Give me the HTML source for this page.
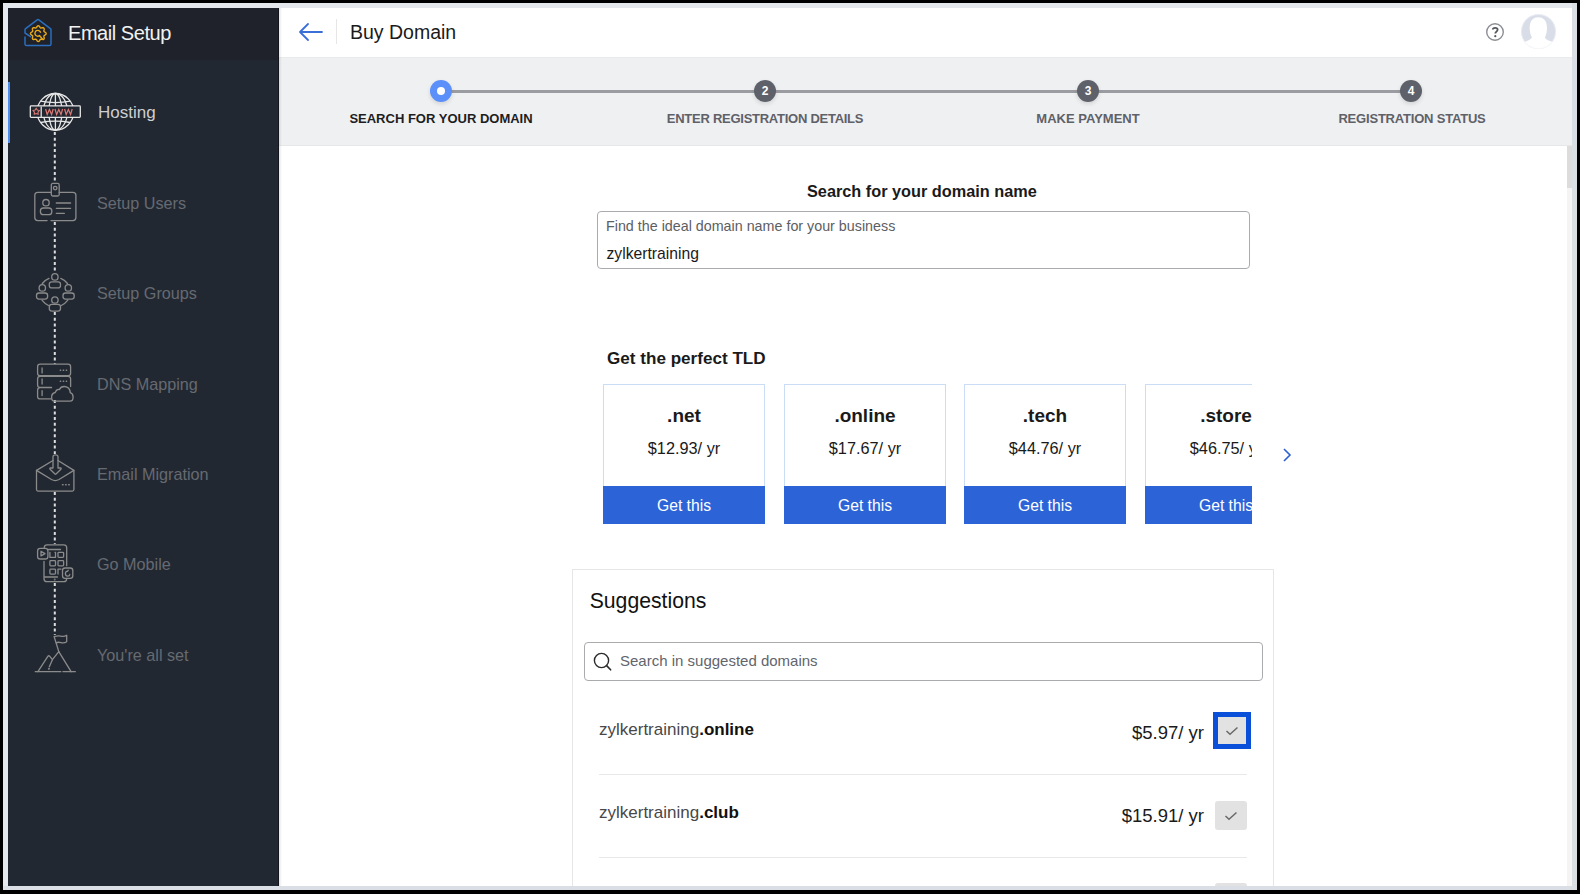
<!DOCTYPE html>
<html><head><meta charset="utf-8">
<style>
*{margin:0;padding:0;box-sizing:border-box}
html,body{width:1580px;height:894px;overflow:hidden;background:#000;font-family:"Liberation Sans",sans-serif}
.abs{position:absolute}
#frame{position:absolute;left:3px;top:3px;width:1574px;height:887px;background:#d9dfe5}
#frame2{position:absolute;left:3px;top:3px;width:5px;height:883px;background:#e4e7eb}
#frame3{position:absolute;left:3px;top:3px;width:1569px;height:5px;background:#e4e7eb}
#side{position:absolute;left:8px;top:8px;width:271px;height:878px;background:#222831;overflow:hidden}
#sidehead{position:absolute;left:0;top:0;width:271px;height:52px;background:#1f222a}
#sideedge{position:absolute;left:278px;top:8px;width:1px;height:878px;background:#14161b}
#shadow{position:absolute;left:279px;top:8px;width:3px;height:878px;background:linear-gradient(90deg,rgba(0,0,0,.10),rgba(0,0,0,0))}
#main{position:absolute;left:279px;top:8px;width:1293px;height:878px;background:#fff;overflow:hidden}
#hdr{position:absolute;left:0;top:0;width:1293px;height:50px;background:#fff;border-bottom:1px solid #e8eaec}
#stepper{position:absolute;left:0;top:50px;width:1293px;height:88px;background:#eff0f2;border-bottom:1px solid #e6e7e9}
.t{position:absolute;white-space:nowrap;line-height:1}
.navt{position:absolute;left:89px;font-size:16.2px;color:#666a71;white-space:nowrap;line-height:1}
.step{position:absolute;width:22px;height:22px;border-radius:50%;background:#5e6169;color:#fff;font-size:12px;font-weight:bold;text-align:center;line-height:22px;box-shadow:0 2px 4px rgba(0,0,0,.12)}
.slab{position:absolute;font-size:13px;font-weight:bold;color:#5f6168;white-space:nowrap;line-height:1;transform:translateX(-50%)}
.card{position:absolute;top:376px;width:162px;height:140px;border:1px solid #cadcf6;background:#fff}
.card .tld{position:absolute;left:0;width:160px;top:21px;text-align:center;font-size:19px;font-weight:bold;color:#1a1a1a;line-height:1}
.card .pr{position:absolute;left:0;width:160px;top:55px;text-align:center;font-size:16.3px;color:#1a1a1a;line-height:1}
.card .btn{position:absolute;left:-1px;bottom:-1px;width:162px;height:38px;background:#2c64d8;color:#fff;font-size:15.7px;text-align:center;line-height:40px}
.ic{fill:none;stroke:#8b8b8b;stroke-width:1.3;stroke-linecap:round;stroke-linejoin:round}
</style></head>
<body>
<div id="frame"></div><div id="frame2"></div><div id="frame3"></div>
<div id="side">
  <div id="sidehead">
    <svg class="abs" style="left:12px;top:8px" width="36" height="36" viewBox="0 0 36 36">
      <path d="M10.5 20.6 L5 17 V14 Q5 13.2 5.6 12.7 L17.2 3.9 Q18 3.3 18.8 3.9 L30.4 12.7 Q31 13.2 31 14 V28 Q31 29.6 29.4 29.6 H6.6 Q5 29.6 5 28 V21" fill="none" stroke="#2a6fc0" stroke-width="1.5" stroke-linejoin="round" stroke-linecap="round"/>
      <path d="M26.20 17.60 L26.06 18.11 L25.69 18.57 L25.17 18.97 L24.63 19.30 L24.19 19.60 L23.94 19.93 L23.88 20.35 L23.97 20.88 L24.12 21.49 L24.21 22.14 L24.15 22.73 L23.89 23.19 L23.43 23.45 L22.84 23.51 L22.19 23.42 L21.58 23.27 L21.05 23.18 L20.63 23.24 L20.30 23.49 L20.00 23.93 L19.67 24.47 L19.27 24.99 L18.81 25.36 L18.30 25.50 L17.79 25.36 L17.33 24.99 L16.93 24.47 L16.60 23.93 L16.30 23.49 L15.97 23.24 L15.55 23.18 L15.03 23.27 L14.41 23.42 L13.76 23.51 L13.17 23.45 L12.71 23.19 L12.45 22.73 L12.39 22.14 L12.48 21.49 L12.63 20.88 L12.72 20.35 L12.66 19.93 L12.41 19.60 L11.97 19.30 L11.43 18.97 L10.91 18.57 L10.54 18.11 L10.40 17.60 L10.54 17.09 L10.91 16.63 L11.43 16.23 L11.97 15.90 L12.41 15.60 L12.66 15.27 L12.72 14.85 L12.63 14.33 L12.48 13.71 L12.39 13.06 L12.45 12.47 L12.71 12.01 L13.17 11.75 L13.76 11.69 L14.41 11.78 L15.02 11.93 L15.55 12.02 L15.97 11.96 L16.30 11.71 L16.60 11.27 L16.93 10.73 L17.33 10.21 L17.79 9.84 L18.30 9.70 L18.81 9.84 L19.27 10.21 L19.67 10.73 L20.00 11.27 L20.30 11.71 L20.63 11.96 L21.05 12.02 L21.58 11.93 L22.19 11.78 L22.84 11.69 L23.43 11.75 L23.89 12.01 L24.15 12.47 L24.21 13.06 L24.12 13.71 L23.97 14.32 L23.88 14.85 L23.94 15.27 L24.19 15.60 L24.63 15.90 L25.17 16.23 L25.69 16.63 L26.06 17.09 L26.20 17.60Z" fill="none" stroke="#e8a91a" stroke-width="1.4" stroke-linejoin="round"/>
      <path d="M20.5 16.2 A2.9 2.9 0 1 0 19.6 19.6 L22.6 23.2" fill="none" stroke="#e8a91a" stroke-width="1.4" stroke-linecap="round" stroke-linejoin="round"/>
    </svg>
    <div class="t" style="left:60px;top:15.4px;font-size:20px;letter-spacing:-0.45px;color:#f2f2f2">Email Setup</div>
  </div>
  <div class="abs" style="left:0;top:74px;width:2px;height:61px;background:#4d8ff0"></div>
  <div class="navt" style="left:90px;top:96.3px;font-size:17px;color:#cdcfd3">Hosting</div>
  <div class="navt" style="top:187.2px">Setup Users</div>
  <div class="navt" style="top:277.1px">Setup Groups</div>
  <div class="navt" style="top:367.7px">DNS Mapping</div>
  <div class="navt" style="top:458.1px">Email Migration</div>
  <div class="navt" style="top:548.1px">Go Mobile</div>
  <div class="navt" style="top:638.5px">You're all set</div>
</div>
<div id="sideedge"></div>
<svg class="abs" style="left:0;top:0" width="279" height="894" viewBox="0 0 279 894">
  <g stroke="#dedede" stroke-width="2" stroke-dasharray="3 2.7">
    <path d="M54.8 132 V183"/><path d="M54.8 222 V273"/><path d="M54.8 312 V364"/>
    <path d="M54.8 400 V454"/><path d="M54.8 492 V544"/><path d="M54.8 583 V635"/>
  </g>
  <!-- globe -->
  <g transform="translate(25,88)" fill="none" stroke="#e6e6e6" stroke-width="1.3">
    <circle cx="30.4" cy="23.8" r="18.3"/>
    <ellipse cx="30.4" cy="23.8" rx="6.5" ry="18.3"/>
    <ellipse cx="30.4" cy="23.8" rx="12" ry="18.3"/>
    <path d="M30.4 5.5 V42.1"/>
    <path d="M15.5 13.1 Q30.4 16 45.3 13.1"/>
    <path d="M15.5 34.5 Q30.4 31.6 45.3 34.5"/>
    <rect x="5.3" y="17.9" width="50" height="11.5" rx="0.8" fill="#222831"/>
    <path d="M16.2 18.5 V29"/>
    <path d="M11.20 20.30 L12.32 22.06 L14.34 22.58 L13.01 24.19 L13.14 26.27 L11.20 25.50 L9.26 26.27 L9.39 24.19 L8.06 22.58 L10.08 22.06Z" stroke="#e07a74" stroke-width="1.1"/>
    <path d="M20.6 21 L22.2 26.6 L24.4 21.6 L26.6 26.6 L28.2 21 M30 21 L31.6 26.6 L33.8 21.6 L36 26.6 L37.6 21 M39.6 21 L41.2 26.6 L43.4 21.6 L45.6 26.6 L47.2 21" stroke="#e07a74" stroke-width="1.2"/>
  </g>
  <!-- setup users -->
  <g transform="translate(25,175)" class="ic">
    <path d="M22.1 45.6 H12.8 Q9.8 45.6 9.8 42.6 V20.3 Q9.8 17.3 12.8 17.3 H26.3 M34.2 17.3 H47.9 Q50.9 17.3 50.9 20.3 V42.6 Q50.9 45.6 47.9 45.6 H26"/>
    <rect x="26.3" y="8.4" width="7.9" height="12.6" rx="1.5"/>
    <circle cx="30.2" cy="13.1" r="1.8"/>
    <circle cx="21" cy="27.7" r="3.2"/>
    <rect x="15.4" y="33" width="11.4" height="6.7" rx="3"/>
    <path d="M31.3 28 H45.6 M31.3 33.3 H45.6 M31.3 38.3 H39.4"/>
  </g>
  <!-- setup groups -->
  <g transform="translate(25,265)" class="ic">
    <circle cx="29.9" cy="11.9" r="3.2"/><rect x="24.3" y="16.8" width="11.2" height="6.1" rx="2.5"/>
    <circle cx="17.3" cy="22.9" r="3.2"/><rect x="11.5" y="28" width="11.1" height="6.1" rx="2.5"/>
    <circle cx="43.3" cy="22.9" r="3.2"/><rect x="38" y="28" width="11.2" height="6.1" rx="2.5"/>
    <circle cx="29.9" cy="35" r="3.2"/><rect x="24.3" y="39.4" width="11.2" height="6.7" rx="2.5"/>
    <path d="M24 13.4 A16.5 16.5 0 0 0 17.3 18.5 M35.8 13.4 A16.5 16.5 0 0 1 42.5 18.5 M17 35.2 A16.5 16.5 0 0 0 23.5 40.5 M42.8 35.2 A16.5 16.5 0 0 1 36.3 40.5"/>
  </g>
  <!-- dns mapping -->
  <g transform="translate(25,355)" class="ic">
    <rect x="12.6" y="9.2" width="33" height="11.5" rx="2.5"/>
    <path d="M26.5 32.4 H15.1 Q12.6 32.4 12.6 29.9 V23.8 Q12.6 21.3 15.1 21.3 H43.1 Q45.6 21.3 45.6 23.8 V31.5"/>
    <path d="M26.1 43.9 H15.1 Q12.6 43.9 12.6 41.4 V35.2 Q12.6 32.7 15.1 32.7 H26.5"/>
    <path d="M17.1 12.9 V17.9 M17.1 24 V29 M17.1 35.6 V40.6"/>
    <path d="M35.3 15.3 H35.6 M38.3 15.3 H38.6 M41.3 15.3 H41.6 M35.3 26.3 H35.6 M38.3 26.3 H38.6 M41.3 26.3 H41.6" stroke-width="1.5"/>
    <path d="M29.5 46.2 H45 Q48.1 46.2 48.1 42 Q48.1 38.5 45.2 37.6 Q45 32 39.5 31.5 Q35.8 31.3 34.5 34.5 Q31.5 34 30.2 37.5 Q26.6 38.5 26.6 42 Q26.6 46.2 29.5 46.2 Z"/>
  </g>
  <!-- email migration -->
  <g transform="translate(25,445)" class="ic">
    <path d="M11.5 25.4 V44.6 Q11.5 46.1 13 46.1 H47.4 Q48.9 46.1 48.9 44.6 V25.4 L33 15.5 M28 15.5 L11.5 25.4"/>
    <path d="M11.5 25.4 L26.5 34.5 Q30.2 36.6 34 34.5 L48.9 25.4"/>
    <path d="M28 23 V11.8 Q28 9.8 30.5 9.8 Q33 9.8 33 11.8 V23 H35.5 Q36.6 23.2 35.9 24.2 L31 29 Q30.5 29.5 30 29 L25.1 24.2 Q24.4 23.2 25.5 23 Z"/>
    <path d="M37.6 39.7 H38 M40.7 39.7 H41.1 M43.8 39.7 H44.2" stroke-width="1.6"/>
  </g>
  <!-- go mobile -->
  <g transform="translate(25,535)" class="ic">
    <path d="M19 26.5 V43.7 Q19 46.7 22 46.7 H38.7 Q41.7 46.7 41.7 43.7 V43.3 M41.7 30.7 V12.8 Q41.7 9.8 38.7 9.8 H22 Q19.5 9.8 19.2 12.5"/>
    <path d="M23.5 14.5 H35.5 M19.5 42 H32.5"/>
    <path d="M24.9 21.8 V17.3 M24.9 22.4 H30.5 V17.3 H30"/>
    <rect x="33" y="17.3" width="5.6" height="5.1" rx="0.8"/>
    <rect x="24.9" y="25.7" width="5.6" height="5.1" rx="0.8"/><rect x="33" y="25.7" width="5.6" height="5.1" rx="0.8"/>
    <rect x="24.9" y="34.1" width="5.6" height="5" rx="0.8"/>
    <path d="M33 39.1 V34.1 H36"/>
    <rect x="12.6" y="13.4" width="10.3" height="10.6" rx="2.6"/>
    <path d="M16 16.3 V20.9 L20 18.6 Z"/>
    <rect x="37.5" y="33" width="10.3" height="10.3" rx="2.6"/>
    <path d="M42.6 36.2 Q40.3 36.4 40.4 38.8 Q40.6 41.3 42.6 41.2 Q44.6 41.3 44.8 39.5 M42.6 36.2 L43.2 35.3"/>
    <circle cx="29.7" cy="44.5" r="0.3"/>
  </g>
  <!-- all set -->
  <g transform="translate(25,625)" class="ic">
    <path d="M10.3 46.7 H35.8 M38 46.7 H50.3"/>
    <path d="M12.9 46.7 L23 31.2 Q23.8 30.3 24.6 31.2 L27.4 34.7 L33.8 26.6 L46.1 46.7"/>
    <path d="M27.4 34.7 L24.3 41.7"/>
    <circle cx="23.9" cy="43.8" r="0.4"/>
    <path d="M33.8 26.6 L29.1 11.5"/>
    <path d="M29.5 11.6 Q33 10.3 36 11.2 Q39 12 41.7 10.3 V16.8 Q39 18.5 36 17.6 Q33 16.8 31.3 17.9"/>
  </g>
</svg>
<div id="main">
  <div id="hdr">
    <svg class="abs" style="left:19px;top:14px" width="26" height="20" viewBox="0 0 26 20">
      <path d="M24 10 H2 M10 2 L2 10 L10 18" fill="none" stroke="#3a6fd8" stroke-width="1.8" stroke-linecap="round" stroke-linejoin="round"/>
    </svg>
    <div class="abs" style="left:57px;top:11px;width:1px;height:25px;background:#e6e6e6"></div>
    <div class="t" style="left:71px;top:15px;font-size:19.5px;color:#1a1a1a">Buy Domain</div>
    <svg class="abs" style="left:1206.3px;top:14px" width="20" height="20" viewBox="0 0 20 20">
      <circle cx="10" cy="10" r="8.3" fill="none" stroke="#8b8e94" stroke-width="1.4"/>
      <path d="M7.8 7.6 C7.8 5.2 12.6 5.2 12.6 7.6 C12.6 9.6 10.3 9.6 10.3 11.6" fill="none" stroke="#54575e" stroke-width="1.8"/>
      <circle cx="10.3" cy="14.2" r="1.1" fill="#54575e"/>
    </svg>
    <svg class="abs" style="left:1242px;top:6px" width="36" height="36" viewBox="0 0 36 36">
      <defs><clipPath id="avc"><circle cx="17.5" cy="17.6" r="17.4"/></clipPath></defs>
      <g clip-path="url(#avc)">
      <rect x="0" y="0" width="36" height="36" fill="#d8dde8"/>
      <path d="M8.7 14 C8.7 6.5 12.3 3.3 17.3 3.3 C22.3 3.3 26 6.5 26 14 C26 18 25.2 21 23.9 23.5 C25 25.5 28 27 33 28.3 L36 36 L0 36 L2 28.3 C7 27 9.8 25.5 10.9 23.5 C9.6 21 8.7 18 8.7 14 Z" fill="#fff"/>
      </g>
      <circle cx="17.5" cy="17.6" r="17" fill="none" stroke="#f2f3f6" stroke-width="0.6"/>
    </svg>
  </div>
  <div id="stepper">
    <div class="abs" style="left:172px;top:32px;width:960px;height:3px;background:#9a9ca1"></div>
    <div class="step" style="left:151px;top:22px;background:#5b8ff9"><div class="abs" style="left:7px;top:7px;width:8px;height:8px;border-radius:50%;background:#fff"></div></div>
    <div class="step" style="left:475px;top:22px">2</div>
    <div class="step" style="left:798px;top:22px">3</div>
    <div class="step" style="left:1121px;top:22px">4</div>
    <div class="slab" style="left:162px;top:54px;color:#1d1d1f">SEARCH FOR YOUR DOMAIN</div>
    <div class="slab" style="left:486px;top:54px;letter-spacing:-0.26px">ENTER REGISTRATION DETAILS</div>
    <div class="slab" style="left:809px;top:54px">MAKE PAYMENT</div>
    <div class="slab" style="left:1133px;top:54px;letter-spacing:-0.2px">REGISTRATION STATUS</div>
  </div>
  <!-- scrollbar -->
  <div class="abs" style="left:1288px;top:138px;width:5px;height:740px;background:#f4f4f4"></div>
  <div class="abs" style="left:1288px;top:138px;width:5px;height:42px;background:#dcdcdc"></div>

  <div class="t" style="left:528px;top:174.9px;font-size:16.3px;font-weight:bold;color:#1a1a1a">Search for your domain name</div>
  <div class="abs" style="left:318px;top:203px;width:653px;height:58px;border:1px solid #a9abaf;border-radius:4px"></div>
  <div class="t" style="left:327px;top:211.4px;font-size:14.3px;color:#5c5e62">Find the ideal domain name for your business</div>
  <div class="t" style="left:327.5px;top:238.2px;font-size:15.7px;color:#1a1a1a">zylkertraining</div>

  <div class="t" style="left:328px;top:341.7px;font-size:17.1px;font-weight:bold;color:#1a1a1a">Get the perfect TLD</div>
  <div class="card" style="left:324px"><div class="tld">.net</div><div class="pr">$12.93/ yr</div><div class="btn">Get this</div></div>
  <div class="card" style="left:505px"><div class="tld">.online</div><div class="pr">$17.67/ yr</div><div class="btn">Get this</div></div>
  <div class="card" style="left:685px"><div class="tld">.tech</div><div class="pr">$44.76/ yr</div><div class="btn">Get this</div></div>
  <div class="abs" style="left:866px;top:376px;width:107px;height:141px;overflow:hidden">
    <div class="card" style="left:0;top:0"><div class="tld">.store</div><div class="pr">$46.75/ yr</div><div class="btn">Get this</div></div>
  </div>
  <svg class="abs" style="left:1003px;top:440px" width="10" height="14" viewBox="0 0 10 14">
    <path d="M2 1 L8 7 L2 13" fill="none" stroke="#2c5fd0" stroke-width="1.6"/>
  </svg>

  <div class="abs" style="left:293px;top:561px;width:702px;height:330px;border:1px solid #e6e6e6"></div>
  <div class="t" style="left:310.7px;top:582.2px;font-size:21.2px;color:#111">Suggestions</div>
  <div class="abs" style="left:305px;top:634px;width:679px;height:39px;border:1px solid #a9abaf;border-radius:4px"></div>
  <svg class="abs" style="left:313.6px;top:644.4px" width="20" height="20" viewBox="0 0 20 20">
    <circle cx="8.5" cy="8.5" r="7.1" fill="none" stroke="#2a2a2a" stroke-width="1.4"/>
    <path d="M13.6 13.6 L17.6 17.8" stroke="#2a2a2a" stroke-width="1.6" stroke-linecap="round"/>
  </svg>
  <div class="t" style="left:341px;top:645.2px;font-size:15px;color:#62656b">Search in suggested domains</div>

  <div class="t" style="left:320px;top:713.2px;font-size:17px;color:#484848">zylkertraining<b style="color:#111">.online</b></div>
  <div class="t" style="right:368px;top:716.1px;font-size:18.5px;color:#1a1a1a">$5.97/ yr</div>
  <div class="abs" style="left:934px;top:704px;width:38px;height:37px;border:5px solid #0b50d8;background:#e2e2e2"></div>
  <svg class="abs" style="left:946px;top:718px" width="14" height="10" viewBox="0 0 14 10"><path d="M1.5 5 L5 8.3 L12.5 1.5" fill="none" stroke="#6a6a6a" stroke-width="1.5"/></svg>
  <div class="abs" style="left:320px;top:766px;width:648px;height:1px;background:#e8e8e8"></div>
  <div class="t" style="left:320px;top:796.1px;font-size:17px;color:#484848">zylkertraining<b style="color:#111">.club</b></div>
  <div class="t" style="right:368px;top:798.7px;font-size:18.5px;color:#1a1a1a">$15.91/ yr</div>
  <div class="abs" style="left:936px;top:793px;width:32px;height:29px;border-radius:3px;background:#e2e2e2"></div>
  <svg class="abs" style="left:945px;top:803px" width="14" height="10" viewBox="0 0 14 10"><path d="M1.5 5 L5 8.3 L12.5 1.5" fill="none" stroke="#6a6a6a" stroke-width="1.5"/></svg>
  <div class="abs" style="left:320px;top:849px;width:648px;height:1px;background:#e8e8e8"></div>
  <div class="abs" style="left:936px;top:875px;width:32px;height:29px;border-radius:3px;background:#e2e2e2"></div>
</div>
<div id="shadow"></div>
</body></html>
